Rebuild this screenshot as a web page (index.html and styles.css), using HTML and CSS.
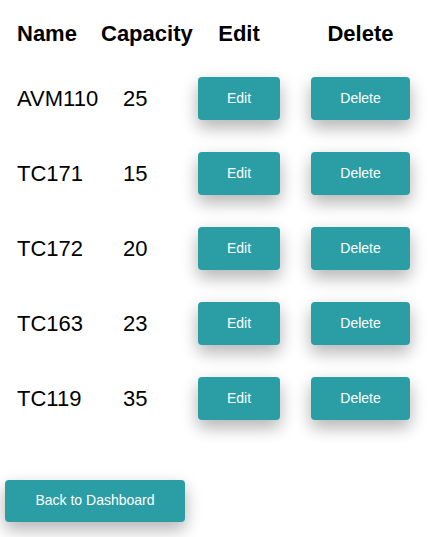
FILE: index.html
```html
<!DOCTYPE html>
<html>
<head>
<meta charset="utf-8">
<link rel="stylesheet" href="styles.css">
</head>
<body>
<div class="page">
  <div class="table">
    <div class="th c1">Name</div>
    <div class="th c2">Capacity</div>
    <div class="th c3">Edit</div>
    <div class="th c4">Delete</div>

    <div class="td c1">AVM110</div>
    <div class="td c2">25</div>
    <div class="td c3"><button class="btn btn-edit">Edit</button></div>
    <div class="td c4"><button class="btn btn-del">Delete</button></div>

    <div class="td c1">TC171</div>
    <div class="td c2">15</div>
    <div class="td c3"><button class="btn btn-edit">Edit</button></div>
    <div class="td c4"><button class="btn btn-del">Delete</button></div>

    <div class="td c1">TC172</div>
    <div class="td c2">20</div>
    <div class="td c3"><button class="btn btn-edit">Edit</button></div>
    <div class="td c4"><button class="btn btn-del">Delete</button></div>

    <div class="td c1">TC163</div>
    <div class="td c2">23</div>
    <div class="td c3"><button class="btn btn-edit">Edit</button></div>
    <div class="td c4"><button class="btn btn-del">Delete</button></div>

    <div class="td c1">TC119</div>
    <div class="td c2">35</div>
    <div class="td c3"><button class="btn btn-edit">Edit</button></div>
    <div class="td c4"><button class="btn btn-del">Delete</button></div>
  </div>
  <button class="btn btn-back">Back to Dashboard</button>
</div>
</body>
</html>
```
FILE: styles.css
```css
html, body {
  margin: 0;
  padding: 0;
  background: #ffffff;
}
body {
  font-family: "Liberation Sans", Arial, sans-serif;
  color: #000000;
}
.page {
  padding-top: 22px;
  padding-bottom: 15px;
}
.table {
  display: grid;
  grid-template-columns: 84px 97px 82px 130px;
  grid-template-rows: 23px;
  grid-auto-rows: 43px;
  row-gap: 32px;
  margin-left: 17px;
}
.th {
  font-size: 22px;
  font-weight: bold;
  line-height: 23px;
  display: flex;
  align-items: center;
}
.td {
  font-size: 22px;
  display: flex;
  align-items: center;
}
.td.c2 {
  padding-left: 22px;
}
.th.c3 {
  justify-content: center;
}
.th.c4 {
  justify-content: center;
  width: 99px;
  justify-self: end;
}
.td.c4 {
  justify-content: flex-end;
}
.btn {
  background: #2b9da5;
  color: #ffffff;
  border: none;
  border-radius: 4px;
  font-family: "Liberation Sans", Arial, sans-serif;
  font-size: 14px;
  line-height: 16px;
  padding: 0 0 2px 0;
  box-shadow: 0 8px 16px rgba(0,0,0,0.2), 0 6px 20px rgba(0,0,0,0.12);
}
.btn-edit {
  width: 82px;
  height: 43px;
}
.btn-del {
  width: 99px;
  height: 43px;
}
.btn-back {
  display: block;
  margin: 60px 0 0 5px;
  width: 180px;
  height: 42px;
}
```
